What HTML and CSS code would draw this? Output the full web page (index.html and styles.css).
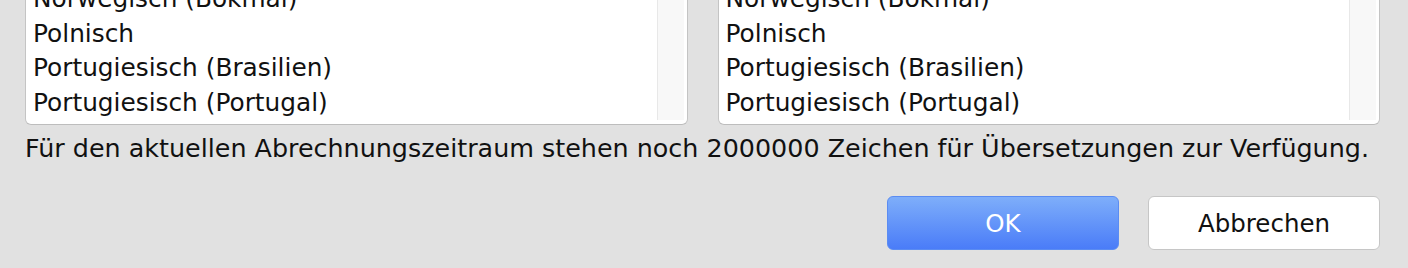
FILE: index.html
```html
<!DOCTYPE html>
<html lang="de">
<head>
    <meta charset="UTF-8">
    <title>Übersetzung</title>
    <link rel="stylesheet" href="styles.css">
</head>
<body>

<div class="dialog">
    <div class="lists">
        <div class="list">
            <ul class="items">
                <li>Norwegisch (Bokmål)</li>
                <li>Polnisch</li>
                <li>Portugiesisch (Brasilien)</li>
                <li>Portugiesisch (Portugal)</li>
            </ul>
            <div class="scrolltrack"></div>
        </div>
        <div class="list">
            <ul class="items">
                <li>Norwegisch (Bokmål)</li>
                <li>Polnisch</li>
                <li>Portugiesisch (Brasilien)</li>
                <li>Portugiesisch (Portugal)</li>
            </ul>
            <div class="scrolltrack"></div>
        </div>
    </div>

    <p class="status">Für den aktuellen Abrechnungszeitraum stehen noch 2000000 Zeichen für Übersetzungen zur Verfügung.</p>

    <div class="buttons">
        <button class="btn primary">OK</button>
        <button class="btn">Abbrechen</button>
    </div>
</div>

</body>
</html>
```

FILE: styles.css
```css
body {
    margin: 0;
    background-color: #e1e1e1;
    font-family: "DejaVu Sans", Verdana, sans-serif;
    color: #111;
}
.dialog {
    padding: 0 28px 0 25px;
}
.lists {
    display: flex;
    gap: 30px;
}
.list {
    flex: 1;
    height: 124px;
    display: flex;
    align-items: flex-end;
    background: white;
    border: 1px solid #c4c4c4;
    border-top: none;
    border-bottom-color: #bdbdbd;
    border-radius: 0 0 6px 6px;
    overflow: hidden;
}
.items {
    flex: 1;
    list-style: none;
    margin: 0 0 4px 0;
    padding: 0 0 0 7px;
    font-size: 24.8px;
}
.items li {
    height: 34.5px;
    line-height: 34.5px;
    white-space: nowrap;
}
.scrolltrack {
    align-self: stretch;
    width: 26px;
    margin: 0 3px 4px 0;
    background: #f8f8f8;
    border-left: 1px solid #e8e8e8;
}
.status {
    margin: 8px 0 0 0;
    font-size: 25.4px;
    line-height: 30px;
    white-space: nowrap;
}
.buttons {
    display: flex;
    justify-content: flex-end;
    gap: 29px;
    margin-top: 33px;
}
.btn {
    width: 232px;
    height: 54px;
    font-family: inherit;
    font-size: 24.5px;
    color: #111;
    background: white;
    border: 1px solid #c6c6c6;
    border-radius: 6px;
}
.primary {
    color: white;
    background: linear-gradient(#7eaefa, #4a7cf8);
    border-color: #5b8cf2;
}
```
